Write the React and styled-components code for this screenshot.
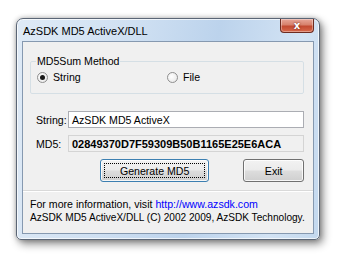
import React from "react";
import styled, { createGlobalStyle } from "styled-components";

const GlobalStyle = createGlobalStyle`
  html, body {
    margin: 0;
    padding: 0;
    background: #ffffff;
  }
  body {
    font-family: "Liberation Sans", Arial, sans-serif;
    font-size: 10.6px;
    color: #000;
  }
`;

const Page = styled.div`
  width: 340px;
  height: 259px;
  padding: 18px 0 0 16px;
  box-sizing: border-box;
  overflow: hidden;
`;

const Window = styled.div`
  width: 304px;
  height: 222px;
  box-sizing: border-box;
  border: 1px solid #5b6676;
  border-radius: 7px 7px 5px 5px;
  background: linear-gradient(100deg, #dfeaf6 0%, #cfe0f2 35%, #bcd3ec 60%, #d3e3f4 85%, #c3d8ee 100%);
  box-shadow: 0 0 5px rgba(0, 0, 0, 0.25), 3px 4px 9px rgba(0, 0, 0, 0.45),
    inset 0 0 0 1px rgba(255, 255, 255, 0.7);
  display: flex;
  flex-direction: column;
  padding: 0 5px 5px 5px;
`;

const TitleBar = styled.div`
  height: 22px;
  display: flex;
  align-items: flex-start;
  justify-content: space-between;
`;

const Title = styled.span`
  font-size: 11px;
  margin-top: 6px;
  margin-left: 1px;
  color: #000;
`;

const CloseButton = styled.div`
  width: 34px;
  height: 14px;
  box-sizing: border-box;
  border: 1px solid #6d2b20;
  border-top: none;
  border-radius: 0 0 4px 4px;
  background: linear-gradient(#e8a799 0%, #d7816c 45%, #c24a31 55%, #d86a4c 100%);
  box-shadow: inset 0 0 0 1px rgba(255, 255, 255, 0.35);
  display: flex;
  align-items: center;
  justify-content: center;
  color: #fff;
  font-family: "DejaVu Sans", sans-serif;
  font-weight: bold;
  font-size: 10px;
  text-shadow: 0 0 2px #5a1a10;
`;

const Client = styled.div`
  flex: 1;
  background: #f0f0f0;
  border: 1px solid #8699b0;
  display: flex;
  flex-direction: column;
`;

const Group = styled.fieldset`
  margin: 13px 9px 0 7px;
  padding: 0 6px 0 5px;
  border: 1px solid #d5dfe5;
  border-radius: 2px;
  height: 37px;
  box-sizing: content-box;
`;

const Legend = styled.legend`
  padding: 0 1px;
  color: #000;
`;

const RadioRow = styled.div`
  display: flex;
  align-items: center;
  margin-top: 4px;
  margin-left: 1px;
`;

const RadioOption = styled.div`
  display: flex;
  align-items: center;
  gap: 5px;
  width: ${(p) => p.$width || "auto"};
`;

const RadioCircle = styled.span`
  width: 11px;
  height: 11px;
  box-sizing: border-box;
  border-radius: 50%;
  border: 1px solid #8f8f8f;
  background: radial-gradient(circle at 40% 40%, #ffffff 0%, #e4e4e4 100%);
  display: flex;
  align-items: center;
  justify-content: center;
  &::after {
    content: "";
    width: 5px;
    height: 5px;
    border-radius: 50%;
    background: ${(p) => (p.$checked ? "#1a1a1a" : "transparent")};
  }
`;

const FieldRow = styled.div`
  display: flex;
  align-items: center;
  margin: ${(p) => p.$margin};
  padding: 0 9px 0 13px;
`;

const FieldLabel = styled.span`
  width: 32px;
  flex-shrink: 0;
`;

const TextBox = styled.div`
  flex: 1;
  height: 17px;
  box-sizing: border-box;
  border: 1px solid ${(p) => (p.$readOnly ? "#d4d4d4" : "#abadb3")};
  background: ${(p) => (p.$readOnly ? "#f0f0f0" : "#ffffff")};
  display: flex;
  align-items: center;
  padding-left: 3px;
  font-size: ${(p) => (p.$readOnly ? "11px" : "inherit")};
  font-weight: ${(p) => (p.$readOnly ? "bold" : "normal")};
`;

const ButtonRow = styled.div`
  display: flex;
  margin: 7px 9px 0 77px;
  gap: 34px;
`;

const Button = styled.div`
  width: ${(p) => p.$width};
  height: 23px;
  box-sizing: border-box;
  border: 1px solid ${(p) => (p.$default ? "#3c7fb1" : "#707070")};
  border-radius: 3px;
  background: linear-gradient(#f2f2f2 0%, #ebebeb 48%, #dddddd 52%, #cfcfcf 100%);
  box-shadow: inset 0 0 0 1px rgba(255, 255, 255, 0.8);
  display: flex;
  align-items: center;
  justify-content: center;
  padding: 3px;
`;

const FocusRect = styled.span`
  flex: 1;
  align-self: stretch;
  display: flex;
  align-items: center;
  justify-content: center;
  border: 1px dotted ${(p) => (p.$show ? "#000" : "transparent")};
`;

const Separator = styled.div`
  height: 0;
  border-top: 1px solid #d9d9d9;
  border-bottom: 1px solid #ffffff;
  margin-top: 8px;
`;

const Footer = styled.div`
  padding: 6px 0 0 7px;
  line-height: 13px;
  white-space: nowrap;
`;

const FooterLine = styled.div`
  font-size: ${(p) => p.$size};
`;

const Link = styled.span`
  color: #0000ff;
`;

export default function App() {
  return (
    <>
      <GlobalStyle />
      <Page>
        <Window>
          <TitleBar>
            <Title>AzSDK MD5 ActiveX/DLL</Title>
            <CloseButton>x</CloseButton>
          </TitleBar>
          <Client>
            <Group>
              <Legend>MD5Sum Method</Legend>
              <RadioRow>
                <RadioOption $width="130px">
                  <RadioCircle $checked />
                  <span>String</span>
                </RadioOption>
                <RadioOption>
                  <RadioCircle />
                  <span>File</span>
                </RadioOption>
              </RadioRow>
            </Group>
            <FieldRow $margin="17px 0 0 0">
              <FieldLabel>String:</FieldLabel>
              <TextBox>AzSDK MD5 ActiveX</TextBox>
            </FieldRow>
            <FieldRow $margin="7px 0 0 0">
              <FieldLabel>MD5:</FieldLabel>
              <TextBox $readOnly>02849370D7F59309B50B1165E25E6ACA</TextBox>
            </FieldRow>
            <ButtonRow>
              <Button $width="110px" $default>
                <FocusRect $show>Generate MD5</FocusRect>
              </Button>
              <Button $width="61px">
                <FocusRect>Exit</FocusRect>
              </Button>
            </ButtonRow>
            <Separator />
            <Footer>
              <FooterLine $size="10.6px">
                For more information, visit <Link>http://www.azsdk.com</Link>
              </FooterLine>
              <FooterLine $size="10.1px">
                AzSDK MD5 ActiveX/DLL (C) 2002 2009, AzSDK Technology.
              </FooterLine>
            </Footer>
          </Client>
        </Window>
      </Page>
    </>
  );
}
